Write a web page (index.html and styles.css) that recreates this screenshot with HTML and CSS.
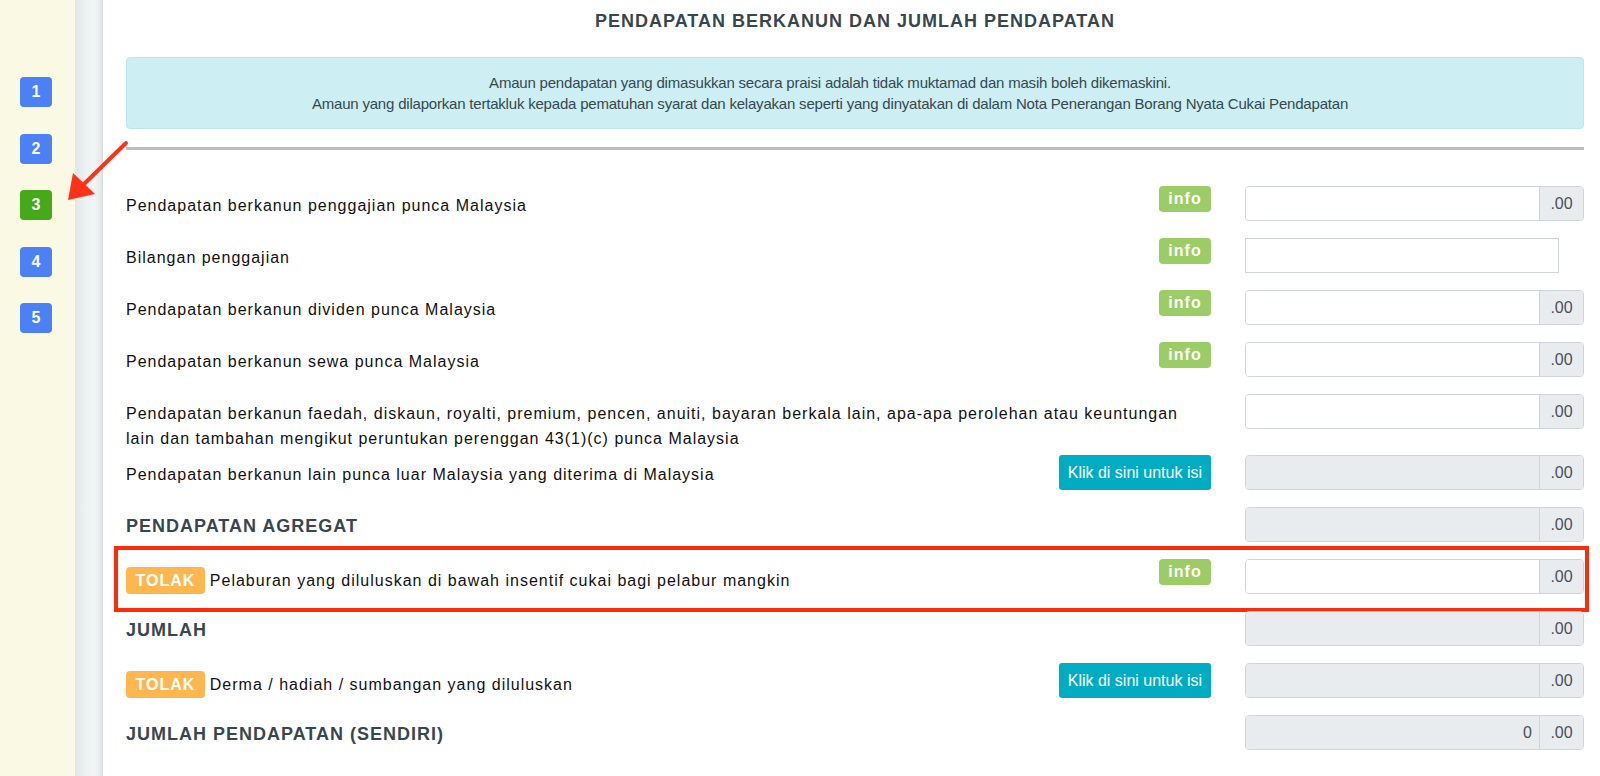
FILE: index.html
```html
<!DOCTYPE html>
<html lang="ms">
<head>
    <meta charset="UTF-8">
    <meta name="viewport" content="width=device-width, initial-scale=1.0">
    <title>Pendapatan Berkanun dan Jumlah Pendapatan</title>
    <link rel="stylesheet" href="styles.css">
</head>
<body>

<div class="layout">
    <nav class="steps">
        <span class="step">1</span>
        <span class="step">2</span>
        <span class="step active">3</span>
        <span class="step">4</span>
        <span class="step">5</span>
    </nav>
    <div class="gutter"></div>

    <main class="form-page">
        <h1>Pendapatan Berkanun dan Jumlah Pendapatan</h1>

        <div class="notice">
            Amaun pendapatan yang dimasukkan secara praisi adalah tidak muktamad dan masih boleh dikemaskini.<br>
            Amaun yang dilaporkan tertakluk kepada pematuhan syarat dan kelayakan seperti yang dinyatakan di dalam Nota Penerangan Borang Nyata Cukai Pendapatan
        </div>

        <div class="divider"></div>

        <div class="field">
            <div class="field-label">
                <span class="field-text">Pendapatan berkanun penggajian punca Malaysia</span>
                <button class="info">info</button>
            </div>
            <div class="amount"><input type="text"><span class="cents">.00</span></div>
        </div>

        <div class="field">
            <div class="field-label">
                <span class="field-text">Bilangan penggajian</span>
                <button class="info">info</button>
            </div>
            <div><input class="count" type="text"></div>
        </div>

        <div class="field">
            <div class="field-label">
                <span class="field-text">Pendapatan berkanun dividen punca Malaysia</span>
                <button class="info">info</button>
            </div>
            <div class="amount"><input type="text"><span class="cents">.00</span></div>
        </div>

        <div class="field">
            <div class="field-label">
                <span class="field-text">Pendapatan berkanun sewa punca Malaysia</span>
                <button class="info">info</button>
            </div>
            <div class="amount"><input type="text"><span class="cents">.00</span></div>
        </div>

        <div class="field">
            <div class="field-label">
                <span class="field-text">Pendapatan berkanun faedah, diskaun, royalti, premium, pencen, anuiti, bayaran berkala lain, apa-apa perolehan atau keuntungan lain dan tambahan mengikut peruntukan perenggan 43(1)(c) punca Malaysia</span>
            </div>
            <div class="amount"><input type="text"><span class="cents">.00</span></div>
        </div>

        <div class="field">
            <div class="field-label">
                <span class="field-text">Pendapatan berkanun lain punca luar Malaysia yang diterima di Malaysia</span>
                <button class="fill">Klik di sini untuk isi</button>
            </div>
            <div class="amount locked"><input type="text" readonly><span class="cents">.00</span></div>
        </div>

        <div class="field">
            <div class="field-label">
                <span class="field-title">Pendapatan Agregat</span>
            </div>
            <div class="amount locked"><input type="text" readonly><span class="cents">.00</span></div>
        </div>

        <div class="field flagged">
            <div class="field-label">
                <span class="field-text deduct"><span class="tolak">TOLAK</span>Pelaburan yang diluluskan di bawah insentif cukai bagi pelabur mangkin</span>
                <button class="info">info</button>
            </div>
            <div class="amount"><input type="text"><span class="cents">.00</span></div>
            <div class="mark"></div>
        </div>

        <div class="field">
            <div class="field-label">
                <span class="field-title">Jumlah</span>
            </div>
            <div class="amount locked"><input type="text" readonly><span class="cents">.00</span></div>
        </div>

        <div class="field">
            <div class="field-label">
                <span class="field-text deduct"><span class="tolak">TOLAK</span>Derma / hadiah / sumbangan yang diluluskan</span>
                <button class="fill">Klik di sini untuk isi</button>
            </div>
            <div class="amount locked"><input type="text" readonly><span class="cents">.00</span></div>
        </div>

        <div class="field">
            <div class="field-label">
                <span class="field-title">Jumlah Pendapatan (Sendiri)</span>
            </div>
            <div class="amount locked"><input type="text" value="0" readonly><span class="cents">.00</span></div>
        </div>
    </main>
</div>

<!-- red pointer towards the current step -->
<svg class="pointer" width="140" height="210" viewBox="0 0 140 210">
    <line x1="126" y1="143" x2="82" y2="186" stroke="#ff3219" stroke-width="4" stroke-linecap="round"/>
    <polygon points="68,200 73,173 95,194" fill="#ff3219"/>
</svg>

</body>
</html>
```

FILE: styles.css
```css
* {
    box-sizing: border-box;
}
html, body {
    margin: 0;
    padding: 0;
}
body {
    font-family: "Liberation Sans", Arial, sans-serif;
    color: #111;
    background-color: #fff;
}
.layout {
    display: flex;
    min-height: 100vh;
}

/* step list on the left */
.steps {
    width: 75px;
    flex: none;
    background-color: #f9f9e4;
    padding: 77px 0 0 20px;
    display: flex;
    flex-direction: column;
    gap: 26.5px;
}
.step {
    width: 32px;
    height: 30px;
    border-radius: 4px;
    background-color: #4b80f6;
    color: #fff;
    font-weight: bold;
    font-size: 16px;
    display: flex;
    align-items: center;
    justify-content: center;
}
.step.active {
    background-color: #45a91a;
}
.gutter {
    width: 28px;
    flex: none;
    background: linear-gradient(to right, #e1e7e7, #eef2f2 40%, #f3f5f5 70%, #e3e8e8 92%, #d6dcdc);
}

/* main form */
.form-page {
    flex: 1;
    padding: 9px 16px 0 23px;
}
h1 {
    margin: 0 0 24px;
    font-size: 18px;
    line-height: 24px;
    letter-spacing: 1px;
    text-transform: uppercase;
    text-align: center;
    color: #37474f;
}
.notice {
    border: 1px solid #b9e7ee;
    background-color: #cdeef3;
    border-radius: 4px;
    padding: 14px 70px 14px 20px;
    text-align: center;
    font-size: 15px;
    letter-spacing: -0.2px;
    line-height: 21px;
    color: #34494e;
}
.divider {
    height: 3px;
    background-color: #bdbdbd;
    margin: 18px 0 36px;
}

.field {
    position: relative;
    display: grid;
    grid-template-columns: 1fr 339px;
    column-gap: 34px;
    min-height: 52px;
    align-items: start;
}
.field-label {
    display: flex;
    justify-content: space-between;
    align-items: flex-start;
    gap: 20px;
}
.field-text {
    padding: 7px 0 4px;
    font-size: 16px;
    line-height: 25px;
    letter-spacing: 1px;
}
.field-text.deduct {
    display: flex;
    align-items: center;
    gap: 5px;
    padding-top: 8px;
}
.field-title {
    padding-top: 7px;
    font-size: 18px;
    line-height: 24px;
    font-weight: bold;
    letter-spacing: 1px;
    text-transform: uppercase;
    color: #37474f;
}
.tolak {
    height: 27px;
    line-height: 27px;
    padding: 0 9.5px;
    border-radius: 4px;
    background-color: #ffb74d;
    color: #fff;
    font-weight: bold;
    letter-spacing: 1px;
}

button {
    flex: none;
    border: none;
    cursor: pointer;
    color: #fff;
    font-family: inherit;
    font-size: 16px;
    padding: 0;
}
.info {
    height: 26px;
    width: 52px;
    border-radius: 4px;
    background-color: #9ccc65;
    font-weight: bold;
    letter-spacing: 1px;
}
.fill {
    height: 35px;
    padding: 0 9px;
    border-radius: 3px;
    background-color: #00acc1;
}

/* amount inputs with the cents suffix */
.amount {
    display: flex;
    height: 35px;
    border: 1px solid #ced4da;
    border-radius: 4px;
    overflow: hidden;
}
.amount input {
    flex: 1;
    min-width: 0;
    border: none;
    outline: none;
    padding: 0 7px;
    font-family: inherit;
    font-size: 16px;
    color: #495057;
    text-align: right;
    background-color: #fff;
}
.amount.locked input {
    background-color: #e9ecef;
}
.cents {
    width: 44px;
    flex: none;
    background-color: #e9ecef;
    border-left: 1px solid #ced4da;
    color: #495057;
    font-size: 16px;
    display: flex;
    align-items: center;
    justify-content: center;
}
.count {
    width: 314px;
    height: 35px;
    border: 1px solid #ced4da;
    outline: none;
    font-family: inherit;
    font-size: 16px;
}

/* highlight frame round one row */
.mark {
    position: absolute;
    top: -13px;
    left: -12px;
    right: -5px;
    bottom: -1px;
    border: 4px solid #ff2a0a;
    pointer-events: none;
}
.pointer {
    position: absolute;
    left: 0;
    top: 0;
}
```
